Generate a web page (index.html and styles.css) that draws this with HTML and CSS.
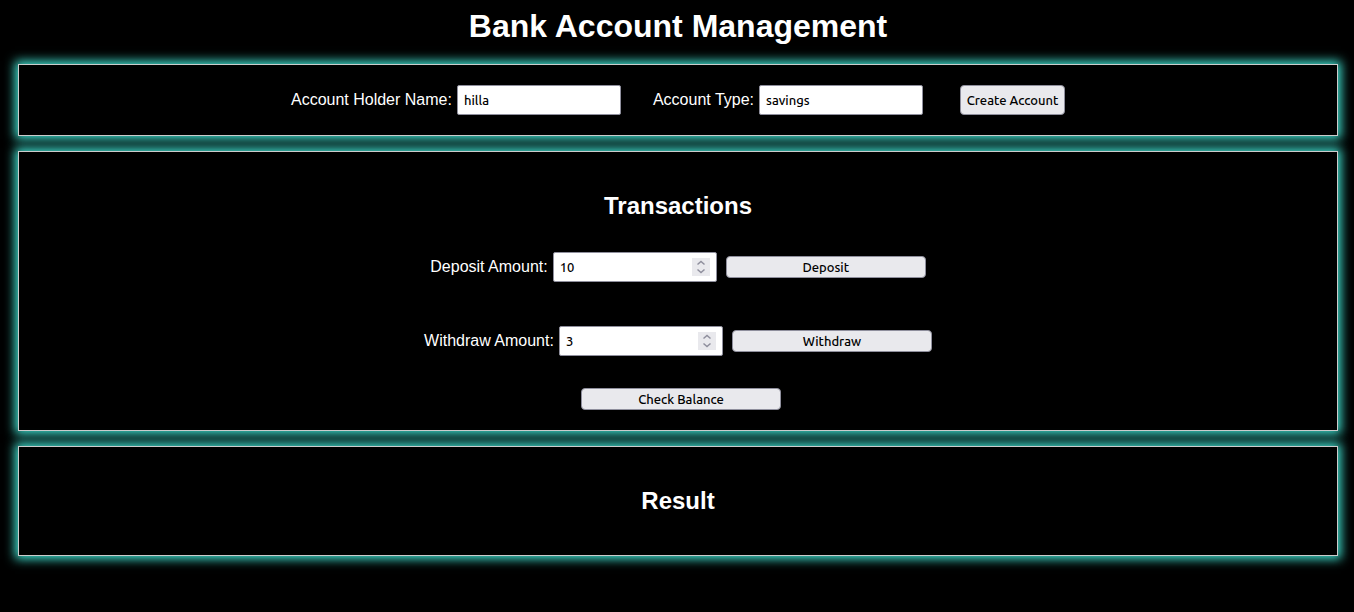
FILE: index.html
```html
<!DOCTYPE html>
<html lang="en">
<head>
<meta charset="utf-8">
<title>Bank Account Management</title>
<link rel="stylesheet" href="styles.css">
</head>
<body>
<main>
<h1>Bank Account Management</h1>
<form class="panel account">
  <div class="field"><label for="holder">Account Holder Name:</label><input id="holder" type="text" value="hilla"></div>
  <div class="field"><label for="type">Account Type:</label><input id="type" type="text" value="savings"></div>
  <button class="create" type="button">Create Account</button>
</form>
<section class="panel transactions">
  <h2>Transactions</h2>
  <div class="row">
    <div class="field"><label for="deposit">Deposit Amount:</label><span class="number"><input id="deposit" type="number" value="10"><svg class="spin" viewBox="0 0 18 18" aria-hidden="true"><path d="M5.5 6.5 9 3.5l3.5 3M5.5 11.5 9 14.5l3.5-3"/></svg></span></div>
    <button type="button">Deposit</button>
  </div>
  <div class="row">
    <div class="field"><label for="withdraw">Withdraw Amount:</label><span class="number"><input id="withdraw" type="number" value="3"><svg class="spin" viewBox="0 0 18 18" aria-hidden="true"><path d="M5.5 6.5 9 3.5l3.5 3M5.5 11.5 9 14.5l3.5-3"/></svg></span></div>
    <button type="button">Withdraw</button>
  </div>
  <button class="balance" type="button">Check Balance</button>
</section>
<section class="panel result">
  <h2>Result</h2>
</section>
</main>
</body>
</html>
```
FILE: styles.css
```css
* { box-sizing: border-box; }
body {
  margin: 0;
  background: #000;
  color: #fff;
  font: 16px/18px "Liberation Sans", Arial, sans-serif;
}
h1 {
  margin: 0 0 5px;
  font-size: 32px;
  line-height: 36px;
  text-align: center;
}
h2 {
  margin: 0;
  font-size: 24px;
  line-height: 28px;
  text-align: center;
}
main {
  display: grid;
  gap: 15px;
  padding: 8px 16px 32px 18px;
}
.panel {
  padding: 20px;
  border: 1px solid #ccc;
  background: #000;
  box-shadow: 0 0 10px 3px #40e0d0;
}
.account {
  display: flex;
  flex-wrap: wrap;
  justify-content: center;
  align-items: center;
}
.field {
  display: flex;
  align-items: center;
  gap: 5px;
}
.account .field { margin-right: 32px; }
input {
  width: 164px;
  height: 30px;
  padding: 2px 6px;
  border: 1px solid #8f8f9d;
  border-radius: 2px;
  background: #fff;
  color: #000;
  font: 500 13px "Ubuntu", "Noto Sans", sans-serif;
}
input[type="number"] { appearance: textfield; }
input::-webkit-inner-spin-button { display: none; }
.number { display: grid; align-items: center; }
.number > * { grid-area: 1 / 1; }
.spin {
  justify-self: end;
  width: 18px;
  height: 18px;
  margin-right: 7px;
  background: #e9e9ed;
  fill: none;
  stroke: #8f8f9d;
  stroke-width: 1.5;
  pointer-events: none;
}
button {
  width: 200px;
  height: 22px;
  padding: 0;
  border: 1px solid #8f8f9d;
  border-radius: 4px;
  background: #e9e9ed;
  color: #000;
  font: 500 13px "Ubuntu", "Noto Sans", sans-serif;
}
.create {
  width: 105px;
  height: 30px;
  margin-left: 5px;
}
.transactions {
  display: flex;
  flex-direction: column;
  align-items: center;
  padding-top: 40px;
}
.row {
  display: flex;
  align-items: center;
  gap: 9px;
  margin-top: 32px;
}
.row + .row { margin-top: 44px; }
.balance { margin: 32px 0 0 6px; }
.result { padding: 40px 20px; }
```
